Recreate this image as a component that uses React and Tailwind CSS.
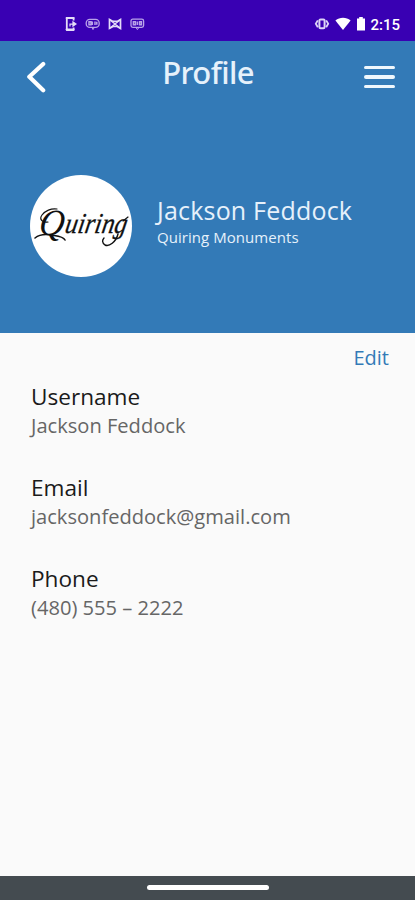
const details = [
  { label: "Username", value: "Jackson Feddock" },
  { label: "Email", value: "jacksonfeddock@gmail.com" },
  { label: "Phone", value: "(480) 555 – 2222" }
];

function NotificationIcons() {
  return (
    <svg className="ml-16 h-4 w-[84px]" viewBox="0 0 84 16" fill="none" stroke="#e4dcf8">
      {/* phone with arrow */}
      <path d="M9.6 4.4V2H2.8v12h6.8v-2.6" strokeWidth="1.8" strokeLinejoin="round" />
      <path d="M2.6 2h7M2.6 13.6h7" strokeWidth="2" strokeLinecap="round" />
      <path d="M6 10.4V8.2h3" strokeWidth="1.2" />
      <path d="M8.4 4.8l4.6 3.2-4.6 3.2z" fill="#e4dcf8" stroke="none" />
      {/* chat bubble */}
      <g stroke="#b9a3e9">
        <rect x="22.2" y="3.4" width="13" height="8" rx="3.6" strokeWidth="1.3" />
        <path d="M28 11.6l1 2 1.2-2" />
        <path d="M25 5.8h2v3h-2zM28.3 5.6v3.4M31 5.6v3.4M32.8 5.8v3" strokeWidth="1.5" />
      </g>
      {/* bow tie */}
      <path d="M45.5 3.4v9l3.5-2h4.2l3.3 2v-9l-3.3 2H49z" strokeWidth="1.7" />
      <path d="M46 4l10 8M56 4l-10 8" strokeWidth="1.2" />
      {/* square chat bubble */}
      <g stroke="#b9a3e9">
        <rect x="67" y="3.2" width="12.6" height="8.2" rx="1.8" strokeWidth="1.3" />
        <path d="M72 11.6l1.4 2 1.4-2" />
        <path d="M69.4 5.8h2v3h-2zM73.4 5.6v3.4M75.6 5.8h1.8v3h-1.8z" strokeWidth="1.5" />
      </g>
    </svg>
  );
}

function StatusBar() {
  return (
    <div className="flex h-[41px] shrink-0 items-center justify-between bg-[#3900b3] pt-[7px] pr-[15px]">
      <NotificationIcons />
      <div className="flex items-center">
        <svg className="h-4 w-[53px]" viewBox="0 0 53 16" fill="none">
          <rect x="5.4" y="3.4" width="5.2" height="8.8" rx="1.2" stroke="#ddd4f7" strokeWidth="2" />
          <path d="M3.8 4.4L1.8 7.8l2 3.4M12.2 4.4l2 3.4-2 3.4" stroke="#ddd4f7" strokeWidth="1.8" />
          <path d="M21.4 4.4c4.3-3.5 10.9-3.5 15.2 0L29 14z" fill="#fff" />
          <path d="M43 2.6h2.2V1h3.6v1.6H51v11.8h-8z" fill="#fff" />
        </svg>
        <span className="ml-[3px] pt-px font-[Roboto] text-[15px] leading-4 font-medium text-white">2:15</span>
      </div>
    </div>
  );
}

function Logo() {
  return (
    <svg className="h-[102px] w-[102px] shrink-0 overflow-visible" viewBox="0 0 102 102">
      <circle cx="51" cy="51" r="51" fill="#fff" />
      <g fill="#111" fontStyle="italic" fontFamily="'Liberation Serif', serif">
        <text transform="translate(8 60) skewX(-8)" fontSize="37" textLength="25" lengthAdjust="spacingAndGlyphs">Q</text>
        <text
          transform="translate(34 58) skewX(-10)"
          fontSize="29"
          textLength="62"
          lengthAdjust="spacingAndGlyphs"
          stroke="#111"
          strokeWidth="0.3"
        >
          uiring
        </text>
      </g>
      {/* flourishes around the first and last letters */}
      <g fill="none" stroke="#111" strokeLinecap="round">
        <path d="M18 47c-6 1-9-3-6-7C15 36 21 33 27 34" strokeWidth="1.2" />
        <path d="M5 63c5-4 10-4 16-3 6 1 12 1 14 5" strokeWidth="1.6" />
        <path d="M88 59c-2 8-9 13-13 11-3-2-3-5-1-7" strokeWidth="1.4" />
        <path d="M93 46l5-4" strokeWidth="1.2" />
      </g>
    </svg>
  );
}

function App() {
  return (
    <div className="flex h-[900px] w-full flex-col overflow-hidden bg-[#fafafa] font-['Open_Sans',sans-serif]">
      <StatusBar />

      <header className="h-[292px] shrink-0 bg-[#337ab7] text-[#e6f1fb]">
        <div className="flex h-[70px] items-center justify-between pr-5 pl-[26px]">
          <button type="button" aria-label="Back">
            <svg className="h-[34px] w-5" viewBox="0 0 20 34" fill="none">
              <path d="M17.2 5L3.3 17.8 17.2 31.2" stroke="#fff" strokeWidth="4.2" strokeLinecap="round" strokeLinejoin="round" />
            </svg>
          </button>
          <h1 className="mb-[8px] ml-[6px] font-['Noto_Sans',sans-serif] text-[31px] leading-9 font-medium tracking-[-0.6px]">
            Profile
          </h1>
          <button type="button" aria-label="Menu" className="mt-[2px] flex flex-col gap-[6px]">
            <span className="h-[3.5px] w-[31px] rounded-full bg-[#eff7fd]" />
            <span className="h-[3.5px] w-[31px] rounded-full bg-[#eff7fd]" />
            <span className="h-[3.5px] w-[31px] rounded-full bg-[#eff7fd]" />
          </button>
        </div>

        <div className="mt-16 flex items-center gap-[25px] pl-[30px]">
          <Logo />
          <div className="mb-[7px]">
            <p className="text-[25px] leading-[29px] tracking-[0.2px]">Jackson Feddock</p>
            <p className="text-[15px] leading-[24px] tracking-[0.05px]">Quiring Monuments</p>
          </div>
        </div>
      </header>

      <main className="flex-1">
        <div className="flex justify-end pt-[11px] pr-[26px]">
          <button type="button" className="text-[20px] leading-7 text-[#337ab7]">Edit</button>
        </div>
        <dl className="flex flex-col gap-[33px] pt-[10px] pl-[31px]">
          {details.map((item) => (
            <div key={item.label}>
              <dt className="text-[22.6px] leading-[30px] text-[#1b1b1b]">{item.label}</dt>
              <dd className="text-[20.1px] leading-7 text-[#666]">{item.value}</dd>
            </div>
          ))}
        </dl>
      </main>

      <footer className="flex h-6 shrink-0 justify-center bg-[#444b50] pt-[9px]">
        <span className="h-[5px] w-[122px] rounded-full bg-white" />
      </footer>
    </div>
  );
}

export default App;
